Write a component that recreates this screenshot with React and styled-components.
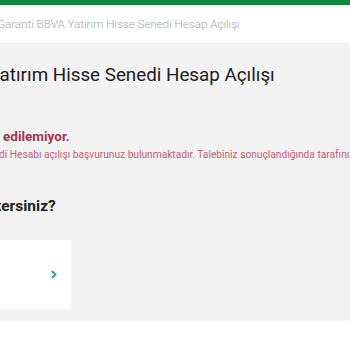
import React from "react";
import styled, { createGlobalStyle } from "styled-components";

const GlobalStyle = createGlobalStyle`
  html, body {
    margin: 0;
    padding: 0;
    background: #ffffff;
    font-family: Roboto, "Open Sans", sans-serif;
    overflow: hidden;
  }
`;

const TopBar = styled.div`
  height: 5px;
  background: #0b8a40;
`;

const Header = styled.header`
  height: 38px;
  background: #ffffff;
  display: flex;
  align-items: center;
  border-bottom: 1px solid #ececec;
`;

const Breadcrumb = styled.span`
  margin-left: -3px;
  font-size: 11.6px;
  font-weight: 300;
  color: #a6a6a6;
  white-space: nowrap;
`;

const Main = styled.main`
  background: #f3f3f3;
  height: 276px;
  padding-top: 1px;
  box-shadow: 0 4px 6px rgba(0, 0, 0, 0.03);
  overflow: hidden;
`;

const Title = styled.h1`
  margin: 19px 0 0 -11px;
  font-size: 18.8px;
  font-weight: 400;
  color: #1b1b1b;
  white-space: nowrap;
`;

const Alert = styled.section`
  margin-top: 42px;
  display: flex;
  flex-direction: column;
  gap: 5px;
`;

const AlertTitle = styled.h2`
  margin: 0 0 0 3px;
  font-size: 13.5px;
  font-weight: 700;
  color: #a3344f;
  white-space: nowrap;
`;

const AlertText = styled.p`
  margin: 0 0 0 -1px;
  font-size: 10.2px;
  color: #c26074;
  white-space: nowrap;
`;

const Question = styled.h3`
  margin: 37px 0 0 -4px;
  font-size: 15.5px;
  font-weight: 700;
  color: #222222;
  white-space: nowrap;
`;

const Card = styled.button`
  margin-top: 25px;
  width: 71px;
  height: 69px;
  border: 0;
  background: #ffffff;
  display: flex;
  align-items: center;
  justify-content: flex-end;
  padding: 0 14px 0 0;
  cursor: pointer;
  color: #2a9aa0;
`;

const Chevron = () => (
  <svg width="6" height="9" viewBox="0 0 6 9" fill="none">
    <path d="M1 1l3.5 3.5L1 8" stroke="currentColor" strokeWidth="1.8" />
  </svg>
);

export default function App() {
  return (
    <>
      <GlobalStyle />
      <TopBar />
      <Header>
        <Breadcrumb>Garanti BBVA Yatırım Hisse Senedi Hesap Açılışı</Breadcrumb>
      </Header>
      <Main>
        <Title>Yatırım Hisse Senedi Hesap Açılışı</Title>
        <Alert>
          <AlertTitle>edilemiyor.</AlertTitle>
          <AlertText>
            di Hesabı açılışı başvurunuz bulunmaktadır. Talebiniz sonuçlandığında tarafınıza bilgi verilecektir.
          </AlertText>
        </Alert>
        <Question>tersiniz?</Question>
        <Card aria-label="Devam">
          <Chevron />
        </Card>
      </Main>
    </>
  );
}
